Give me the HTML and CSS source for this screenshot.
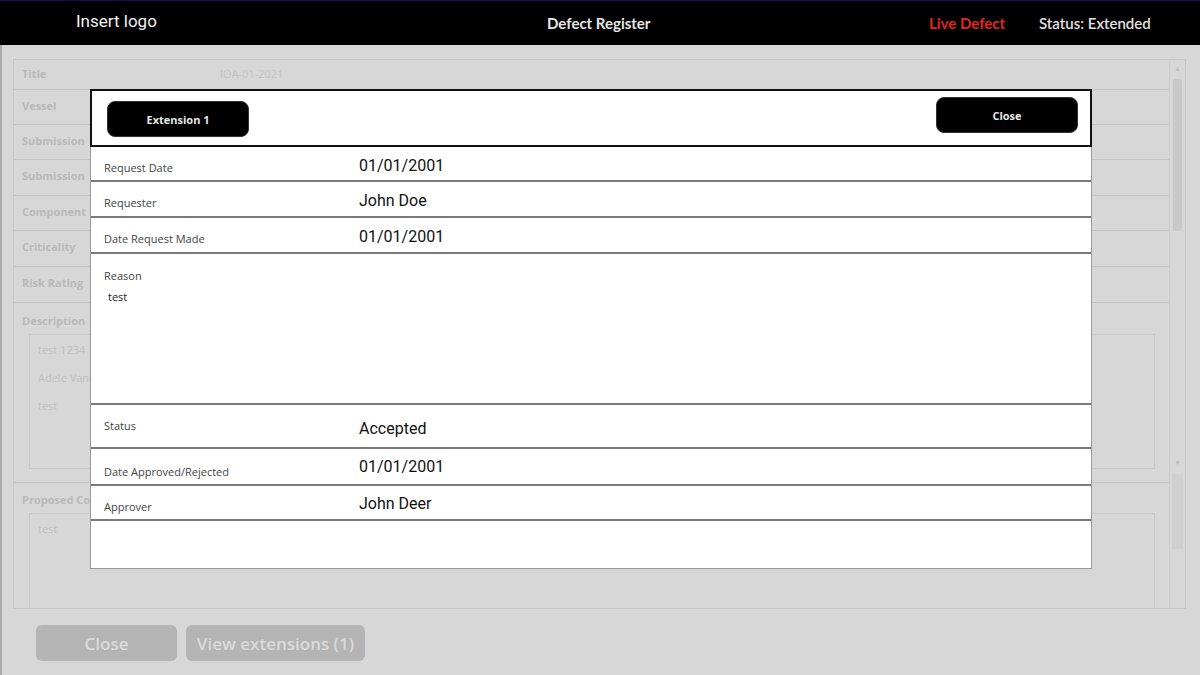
FILE: index.html
```html
<!DOCTYPE html>
<html>
<head>
	<meta charset="utf-8">
	<title>Defect Register</title>
	<link rel="stylesheet" href="styles.css">
</head>
<body>
<div class="topbar">
	<div class="logo">Insert logo</div>
	<div class="title">Defect Register</div>
	<div class="live">Live Defect</div>
	<div class="status">Status: Extended</div>
</div>

<div class="page">
	<div class="form">
		<div class="fields">
			<div class="field"><label>Title</label><span class="val">IOA-01-2021</span></div>
			<div class="field f35"><label>Vessel</label></div>
			<div class="field f35"><label>Submission</label></div>
			<div class="field f36"><label>Submission</label></div>
			<div class="field f35"><label>Component</label></div>
			<div class="field f36"><label>Criticality</label></div>
			<div class="field f36"><label>Risk Rating</label></div>
			<div class="field big">
				<label>Description</label>
				<div class="box">
					<p>test 1234</p>
					<p>Adele Vance</p>
					<p>test</p>
				</div>
			</div>
			<div class="field big last">
				<label>Proposed Corrective Action</label>
				<div class="box tall">
					<p>test</p>
				</div>
			</div>
		</div>
		<div class="scroll">
			<div class="track">
				<span class="arr">&#9650;</span>
				<div class="thumb"></div>
				<div class="spacer"></div>
				<span class="arr">&#9660;</span>
			</div>
			<div class="track2"><div class="thumb2"></div></div>
		</div>
	</div>
	<div class="actions">
		<button class="btn w1">Close</button>
		<button class="btn w2">View extensions (1)</button>
	</div>

	<div class="modal">
		<div class="modal-head">
			<button class="mbtn ext">Extension 1</button>
			<button class="mbtn close">Close</button>
		</div>
		<div class="modal-body">
			<div class="row r35"><label>Request Date</label><span class="v">01/01/2001</span></div>
			<div class="row r36"><label>Requester</label><span class="v">John Doe</span></div>
			<div class="row r36"><label>Date Request Made</label><span class="v">01/01/2001</span></div>
			<div class="row reason"><label>Reason<span class="txt">test</span></label></div>
			<div class="row stat"><label>Status</label><span class="v">Accepted</span></div>
			<div class="row r37"><label>Date Approved/Rejected</label><span class="v up">01/01/2001</span></div>
			<div class="row r35"><label>Approver</label><span class="v up">John Deer</span></div>
		</div>
	</div>
</div>
</body>
</html>
```

FILE: styles.css
```css
body {margin: 0; background: #d7d7d7; font-family: "Open Sans", sans-serif; overflow: hidden; height: 675px;}
.topbar {height: 44px; background: #000; border-top: 1px solid #140c5c; display: flex; align-items: center; color: #fff;}
.logo {font-family: Roboto, sans-serif; font-size: 17px; margin-left: 76px; width: 471px; margin-top: -4px; color: #f2f2f2;}
.title {font-family: Lato, sans-serif; font-weight: bold; font-size: 15px; color: #e6e6e6; width: 382px;}
.live {font-family: Lato, sans-serif; font-weight: bold; font-size: 15px; color: #e2261d; width: 110px;}
.status {font-family: Lato, sans-serif; font-size: 15px; font-weight: 600; color: #e0e0e0;}

.page {position: relative; border-left: 2px solid #a9a9a9; height: 630px; padding: 14px 0 0 11px; box-sizing: border-box;}
.form {width: 1173px; height: 550px; border: 1px solid #c6c6c6; box-sizing: border-box; display: flex; overflow: hidden;}
.fields {flex: 1;}
.field {height: 30px; border-bottom: 1px solid #c4c4c4; display: flex; align-items: flex-start; padding: 7px 0 0 8px; box-sizing: border-box; font-size: 11px; line-height: 14px; font-weight: bold; color: #b9b9b9;}
.field label {width: 68px; margin-right: 130px; overflow: hidden; white-space: nowrap;}
.field .val {font-weight: normal; color: #c3c3c3; font-size: 11px;}
.f35 {height: 35px; padding-top: 9px;}
.f36 {height: 36px; padding-top: 9px;}
.field.big {display: block; height: 180px; padding-top: 11px;}
.field.big .box {margin: 6px 14px 0 7px; height: 135px; border: 1px solid #c8c8c8; padding: 8px 8px; box-sizing: border-box;}
.box p {margin: 0 0 14px; width: 52px; overflow: hidden; white-space: nowrap; font-weight: normal; font-size: 11px; color: #c0c0c0;}
.field.last {border-bottom: none; height: 140px; padding-top: 10px;}
.box.tall {height: 110px;}
.scroll {width: 15px; border-left: 1px solid #cdcdcd;}
.track {height: 409px; display: flex; flex-direction: column; align-items: center; padding-top: 3px; box-sizing: border-box;}
.arr {font-size: 7px; color: #bdbdbd; line-height: 12px;}
.thumb {width: 9px; height: 152px; margin-top: 4px; background: #c9c9c9; border-radius: 3px;}
.spacer {flex: 1;}
.track2 {height: 78px; display: flex; justify-content: center; padding-top: 5px;}
.thumb2 {width: 11px; height: 75px; background: #d0d0d0;}

.actions {display: flex; gap: 9px; margin: 16px 0 0 23px;}
.btn {height: 36px; border: none; border-radius: 6px; background: #b4b4b4; color: #dadada; font-family: "Open Sans", sans-serif; font-weight: 600; font-size: 17px; padding: 0;}
.w1 {width: 141px;}
.w2 {width: 179px;}

.modal {position: absolute; left: 88px; top: 44px; width: 1002px; height: 480px; background: #fff; box-sizing: border-box;}
.modal-head {height: 58px; border: 2px solid #111; box-sizing: border-box; display: flex; justify-content: space-between; align-items: flex-start;}
.mbtn {width: 142px; height: 36px; background: #000; color: #e8e8e8; border: 1px solid #333; border-radius: 8px; font-family: "Open Sans", sans-serif; font-weight: bold; font-size: 11px; padding: 0;}
.ext {margin: 10px 0 0 15px;}
.close {margin: 6px 12px 0 0;}
.modal-body {height: 422px; border: 1px solid #9a9a9a; border-top: none; box-sizing: border-box;}
.row {display: flex; align-items: flex-start; border-bottom: 2px solid #7a7a7a; box-sizing: border-box; padding-left: 13px;}
.row label {width: 255px; font-size: 11px; color: #444; padding-top: 13px; line-height: 16px;}
.row .v {font-family: Roboto, sans-serif; font-size: 16px; color: #111; padding-top: 9px; line-height: 20px;}
.row .v.up {padding-top: 8px;}
.r35 {height: 35px;}
.r36 {height: 36px;}
.r37 {height: 37px;}
.r37 label {padding-top: 15px;}
.reason {height: 151px;}
.reason label {padding-top: 14px;}
.txt {display: block; padding: 5px 0 0 4px; color: #222;}
.stat {height: 44px;}
.stat .v {padding-top: 14px;}
.stat label {padding-top: 13px;}
```
